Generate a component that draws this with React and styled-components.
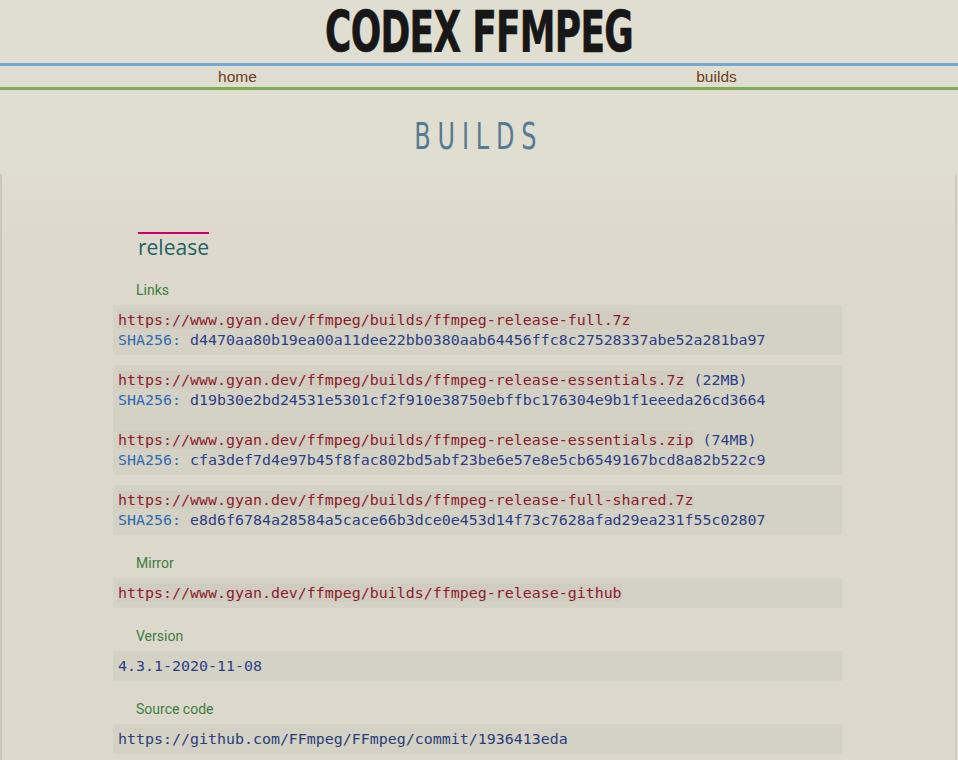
import React from 'react';
import styled, { createGlobalStyle } from 'styled-components';

const GlobalStyle = createGlobalStyle`
  html, body {
    margin: 0;
    padding: 0;
    background: #e0ded1;
  }
  body {
    font-family: Roboto, "Liberation Sans", sans-serif;
  }
`;

const TitleBar = styled.header`
  height: 63px;
  display: flex;
  justify-content: center;
  align-items: center;
`;

const Title = styled.h1`
  margin: 0;
  font-family: "DejaVu Sans Condensed", "DejaVu Sans", sans-serif;
  font-weight: 700;
  font-size: 57px;
  line-height: 60px;
  color: #171717;
  letter-spacing: -1px;
  transform: scaleX(0.7);
  white-space: nowrap;
  -webkit-text-stroke: 0.6px #171717;
`;

const Nav = styled.nav`
  display: grid;
  grid-template-columns: 1fr 1fr;
  border-top: 3px solid #76a6d6;
  border-bottom: 3px solid #80aa56;
  height: 21px;
`;

const NavLink = styled.a`
  text-align: center;
  font-family: "Liberation Sans", Arial, sans-serif;
  font-size: 15.5px;
  line-height: 21px;
  color: #6b3f1e;
  text-decoration: none;
  margin-left: -4px;
`;

const PageHeading = styled.div`
  height: 84px;
  display: flex;
  justify-content: center;
  align-items: center;
`;

const PageTitle = styled.h2`
  margin: 0;
  font-family: "DejaVu Sans Condensed", "DejaVu Sans", sans-serif;
  font-weight: 400;
  font-size: 37px;
  letter-spacing: 9.5px;
  padding-left: 9.5px;
  color: #567b90;
  transform: translateX(-4px) scaleX(0.72);
  padding-top: 8px;
`;

const Panel = styled.main`
  margin-right: 1px;
  min-height: 600px;
  background: linear-gradient(#e0ddd0, #dcd9cc 80px);
  border-left: 2px solid #cbc8bb;
  border-right: 2px solid #cfccbf;
  padding: 58px 0 20px;
`;

const Column = styled.section`
  width: 729px;
  margin: 0 auto;
  transform: translateX(-1px);
`;

const Release = styled.h3`
  display: inline-block;
  margin: 0 0 2px 25px;
  border-top: 2px solid #d10068;
  font-family: "Open Sans", sans-serif;
  font-weight: 400;
  font-size: 21px;
  line-height: 26px;
  color: #1d6066;
`;

const Label = styled.div`
  padding: 18px 0 0 23px;
  margin-bottom: 5px;
  font-size: 14px;
  line-height: 20px;
  color: #3f7c42;
`;

const CodeBlock = styled.pre`
  margin: 0 0 ${p => (p.$spaced ? '10px' : '0')};
  padding: 5px;
  background: #d4d1c5;
  font-family: "DejaVu Sans Mono", "Liberation Mono", monospace;
  font-size: 14.95px;
  line-height: 20px;
  color: #2d3f86;
  white-space: pre;
`;

const Url = styled.span`
  color: ${p => (p.$tone === 'blue' ? '#2a3d78' : '#8c1b2d')};
  background: ${p => (p.$tone === 'blue' ? 'transparent' : '#d0ccbf')};
`;

const Sha = styled.span`
  color: #2f6bb2;
`;

const Hash = styled.span`
  color: #2d3f86;
`;

const base = 'https://www.gyan.dev/ffmpeg/builds/';

const groups = [
  [{ file: 'ffmpeg-release-full.7z', sha: 'd4470aa80b19ea00a11dee22bb0380aab64456ffc8c27528337abe52a281ba97' }],
  [
    { file: 'ffmpeg-release-essentials.7z', size: '22MB', sha: 'd19b30e2bd24531e5301cf2f910e38750ebffbc176304e9b1f1eeeda26cd3664' },
    { file: 'ffmpeg-release-essentials.zip', size: '74MB', sha: 'cfa3def7d4e97b45f8fac802bd5abf23be6e57e8e5cb6549167bcd8a82b522c9' },
  ],
  [{ file: 'ffmpeg-release-full-shared.7z', sha: 'e8d6f6784a28584a5cace66b3dce0e453d14f73c7628afad29ea231f55c02807' }],
];

const Entry = ({ item, last }) => (
  <>
    <Url>{base + item.file}</Url>
    {item.size ? <Hash>{` (${item.size})`}</Hash> : null}
    {'\n'}
    <Sha>SHA256:</Sha>
    <Hash>{' ' + item.sha}</Hash>
    {last ? null : '\n\n'}
  </>
);

export default function App() {
  return (
    <>
      <GlobalStyle />
      <TitleBar>
        <Title>CODEX FFMPEG</Title>
      </TitleBar>
      <Nav>
        <NavLink href="#">home</NavLink>
        <NavLink href="#">builds</NavLink>
      </Nav>
      <PageHeading>
        <PageTitle>BUILDS</PageTitle>
      </PageHeading>
      <Panel>
        <Column>
          <Release>release</Release>
          <Label>Links</Label>
          {groups.map((g, i) => (
            <CodeBlock key={i} $spaced={i < groups.length - 1}>
              {g.map((item, j) => (
                <Entry key={item.file} item={item} last={j === g.length - 1} />
              ))}
            </CodeBlock>
          ))}
          <Label>Mirror</Label>
          <CodeBlock>
            <Url>{base + 'ffmpeg-release-github'}</Url>
          </CodeBlock>
          <Label>Version</Label>
          <CodeBlock>4.3.1-2020-11-08</CodeBlock>
          <Label>Source code</Label>
          <CodeBlock>
            <Url $tone="blue">https://github.com/FFmpeg/FFmpeg/commit/1936413eda</Url>
          </CodeBlock>
        </Column>
      </Panel>
    </>
  );
}
